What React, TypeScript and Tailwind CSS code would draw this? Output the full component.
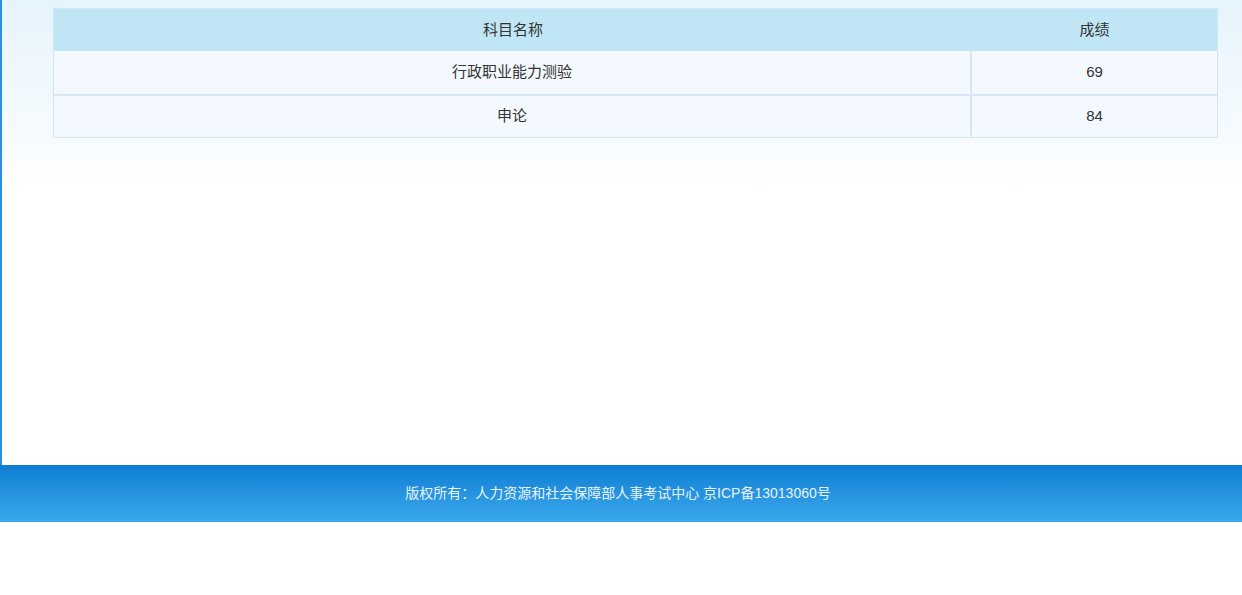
export default function App() {
  const rows = [["行政职业能力测验", "69"], ["申论", "84"]];
  return (
    <div className="w-[1242px] h-[595px] bg-white" style={{ fontFamily: '"Liberation Sans","Noto Sans CJK SC",sans-serif' }}>
      <div className="h-[465px] border-l-2 border-[#2a90e0] bg-gradient-to-b from-[#e6f4fc] via-[#f7fbfe] via-30% to-white to-40% pt-[8px] pl-[51px] pr-[24px]">
        <div className="border border-[#d3e6f3] text-[15px] text-[#333]">
          <div className="flex h-[42px] bg-[#c0e6f5] items-center">
            <div className="w-[918px] text-center">科目名称</div>
            <div className="flex-1 text-center">成绩</div>
          </div>
          {rows.map((r, i) => (
            <div key={i} className={`flex h-[43px] items-center bg-[#f3f9fe] ${i ? "border-t-2 border-[#d8e8f6]" : ""}`}>
              <div className="w-[918px] h-full flex items-center justify-center border-r-2 border-[#d8e8f6]">{r[0]}</div>
              <div className="flex-1 text-center">{r[1]}</div>
            </div>
          ))}
        </div>
      </div>
      <div className="h-[57px] bg-gradient-to-b from-[#0a7ed3] to-[#3aa8ec] flex items-center justify-center text-[14px] text-[#e6f2fc] pr-[6px]">
        版权所有：人力资源和社会保障部人事考试中心 京ICP备13013060号
      </div>
    </div>
  );
}
